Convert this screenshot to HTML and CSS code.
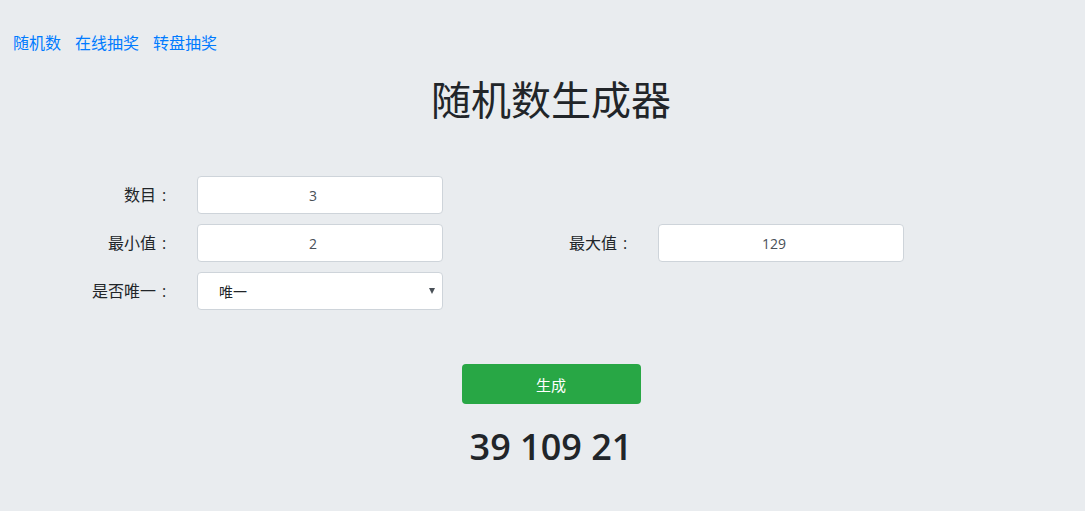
FILE: index.html
```html
<!DOCTYPE html>
<html lang="zh-CN">
    <head>
        <meta charset="UTF-8">
        <meta name="viewport" content="width=device-width, initial-scale=1.0">
        <title>随机数生成器</title>
        <link rel="stylesheet" href="styles.css">
    </head>
<body>

<div class="nav">
    <a href="#">随机数</a>
    <a href="#">在线抽奖</a>
    <a href="#">转盘抽奖</a>
</div>

<div class="main">
    <h1>随机数生成器</h1>

    <form class="form-grid">
        <label for="count">数目<span class="colon">:</span></label>
        <input type="text" id="count" value="3">
        <span></span>
        <span></span>

        <label for="min">最小值<span class="colon">:</span></label>
        <input type="text" id="min" value="2">
        <label for="max">最大值<span class="colon">:</span></label>
        <input type="text" id="max" value="129">

        <label for="unique">是否唯一<span class="colon">:</span></label>
        <div class="select-wrap">
            <select id="unique">
                <option>唯一</option>
                <option>可重复</option>
            </select>
        </div>
    </form>

    <button class="btn-generate" type="button">生成</button>

    <div class="result">39 109 21</div>
</div>

</body>
</html>
```

FILE: styles.css
```css
body {
    font-family: "Open Sans", "Noto Sans CJK SC", sans-serif;
    margin: 0;
    background-color: #e9ecef;
    color: #212529;
    font-size: 16px;
}
.nav {
    padding: 31px 13px 0;
    line-height: 24px;
    display: flex;
    gap: 14px;
}
.nav a {
    color: #007bff;
    text-decoration: none;
}
.main {
    padding-left: 17px;
    display: flex;
    flex-direction: column;
    align-items: center;
}
.main h1 {
    font-size: 40px;
    font-weight: 400;
    line-height: 48px;
    margin: 21px 0 0;
}
.form-grid {
    align-self: flex-start;
    margin: 52px 0 0 -17px;
    display: grid;
    grid-template-columns: 172px 246px 165px 246px;
    column-gap: 25px;
    row-gap: 10px;
    align-items: center;
}
.form-grid label {
    text-align: right;
    line-height: 24px;
}
.form-grid .colon {
    display: inline-block;
    width: 16px;
    text-align: center;
}
.form-grid input, .form-grid select {
    box-sizing: border-box;
    width: 100%;
    height: 38px;
    border: 1px solid #ced4da;
    border-radius: 4px;
    background-color: #fff;
    color: #495057;
    font-family: inherit;
    font-size: 14px;
    text-align: center;
}
.form-grid input {
    padding: 0 14px 0 0;
}
.select-wrap {
    position: relative;
}
.form-grid select {
    -webkit-appearance: none;
    appearance: none;
    text-align: left;
    padding: 0 28px 0 21px;
    color: #212529;
}
.select-wrap::after {
    content: "";
    position: absolute;
    right: 8px;
    top: 16px;
    border-left: 3px solid transparent;
    border-right: 3px solid transparent;
    border-top: 6px solid #495057;
    pointer-events: none;
}
.btn-generate {
    margin-top: 54px;
    width: 179px;
    height: 40px;
    border: none;
    border-radius: 4px;
    background-color: #28a745;
    color: #fff;
    font-family: inherit;
    font-size: 15px;
    cursor: pointer;
}
.result {
    margin-top: 21px;
    font-size: 36px;
    font-weight: 600;
    line-height: 43px;
}
```
